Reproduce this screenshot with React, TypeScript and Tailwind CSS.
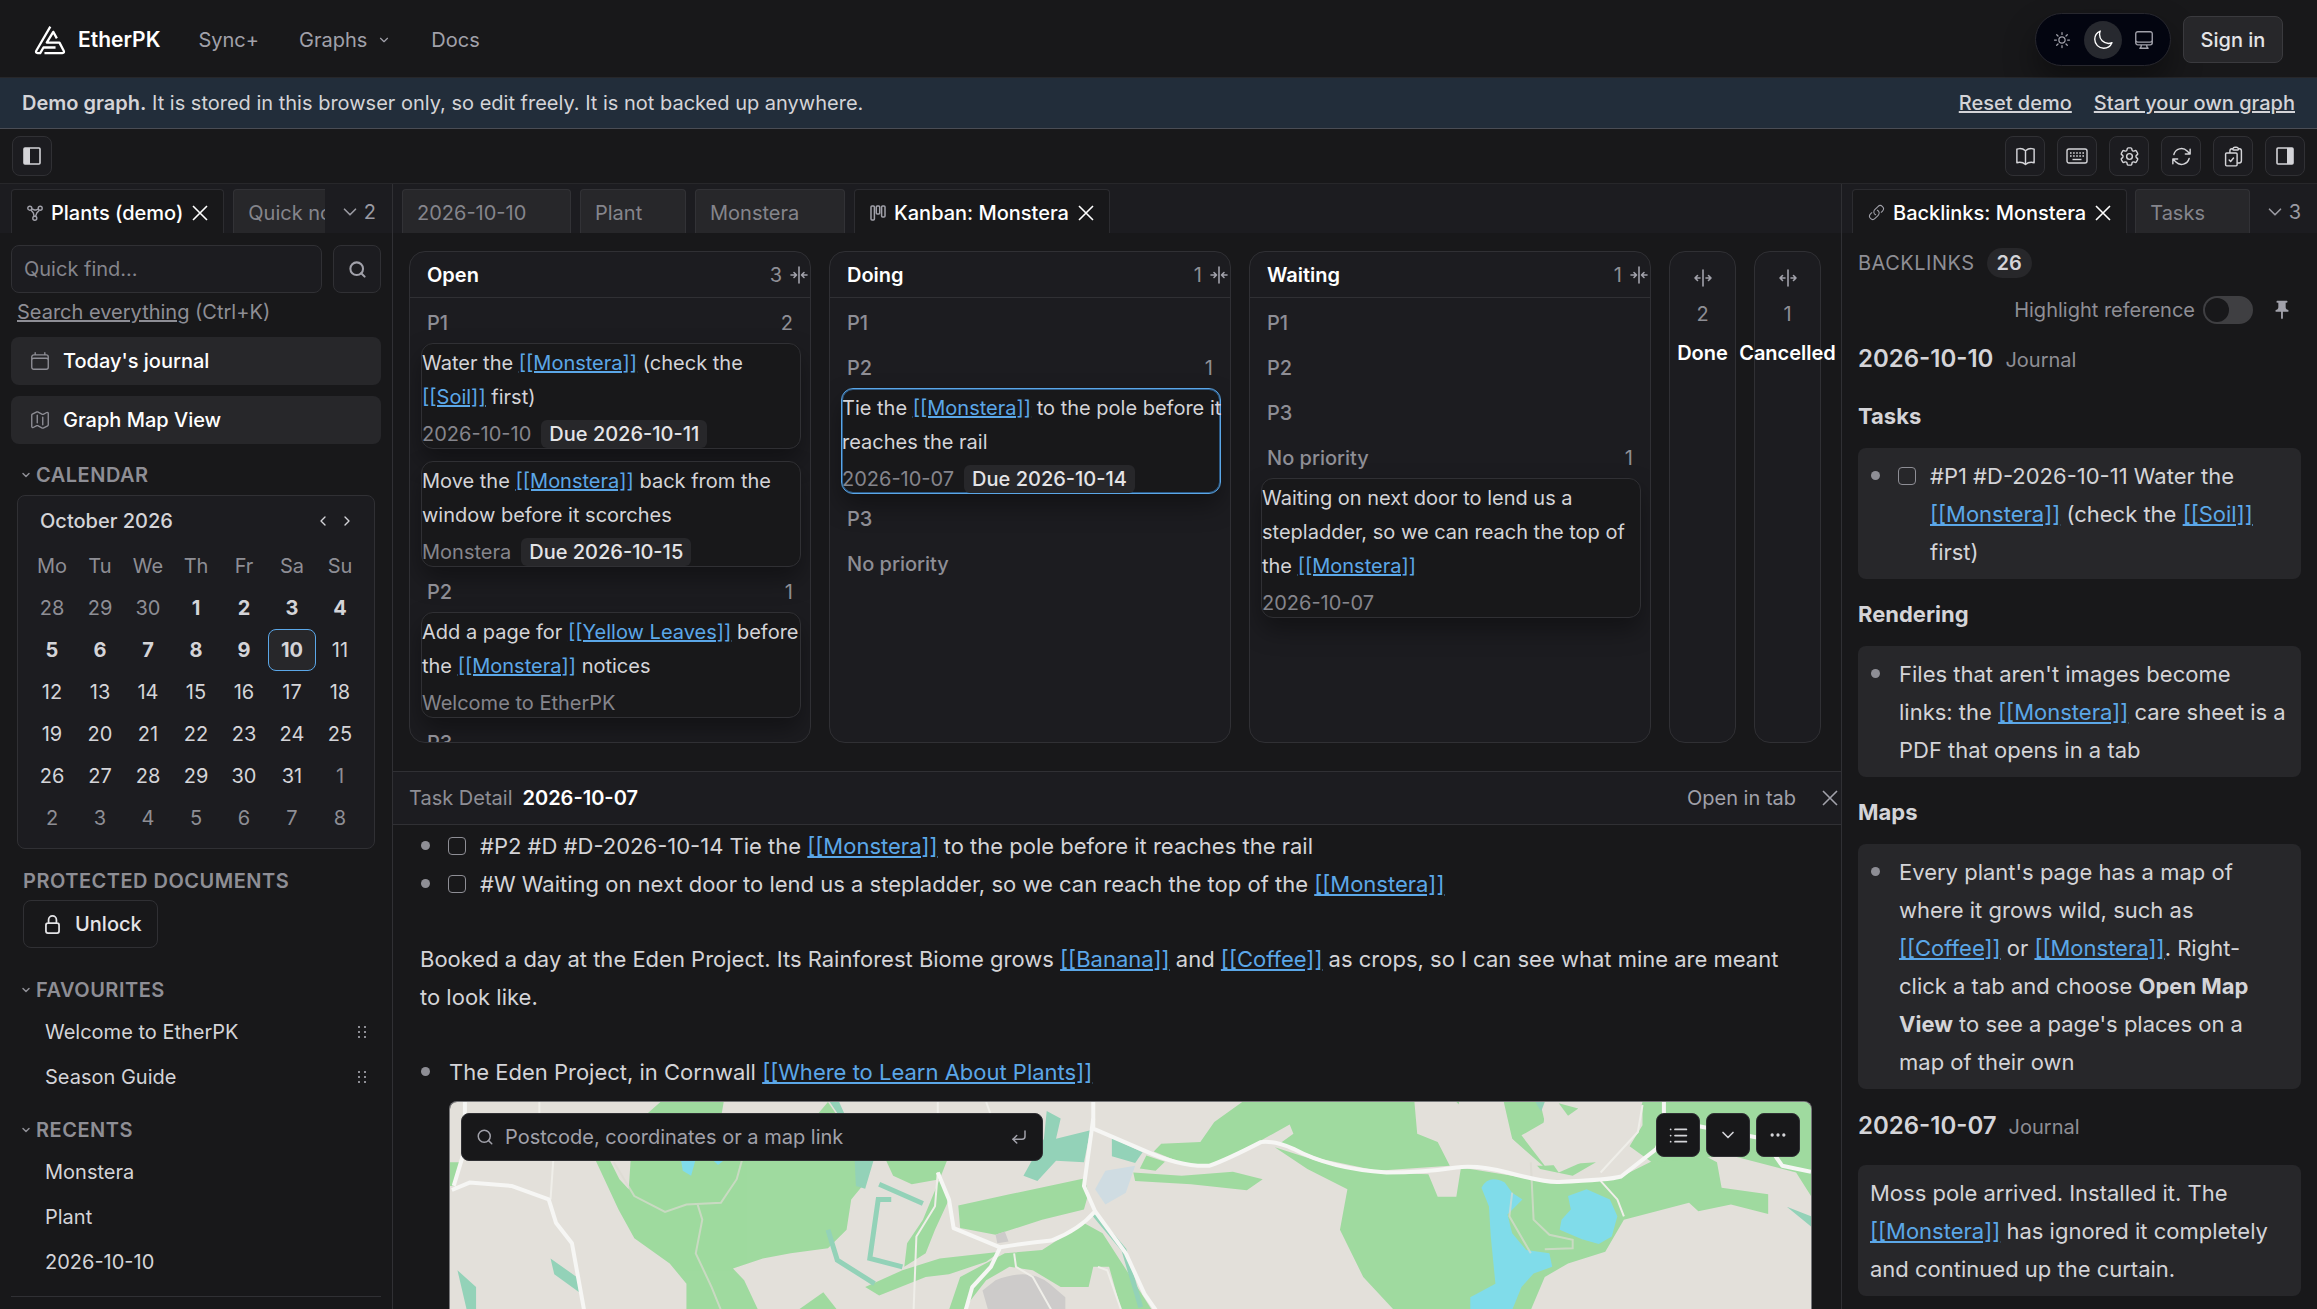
import type { ReactNode } from "react";
import {
  HiOutlineArrowPath,
  HiOutlineBookOpen,
  HiOutlineCalendar,
  HiOutlineClipboardDocumentCheck,
  HiOutlineCog6Tooth,
  HiOutlineComputerDesktop,
  HiOutlineLink,
  HiOutlineLockClosed,
  HiOutlineMap,
  HiOutlineMoon,
  HiOutlineSun,
} from "react-icons/hi2";
import { ChevronDown, ChevronLeft, ChevronRight, CornerDownLeft, Ellipsis, List, Search } from "lucide-react";
import { MdPushPin } from "react-icons/md";

const Logo = () => (
  <svg viewBox="70 42 98 90" className="w-8 h-[30px]" fill="none" stroke="#fff" strokeWidth="7" strokeLinejoin="round" aria-hidden="true">
    <path d="M120 46 L77 120 Q74 127 81 127 H89 L99 110 H136" />
    <path d="M102 127 H157 Q164 127 161 120 L148 95 H109 L129 62 L140 82" />
  </svg>
);

const CloseIcon = () => (
  <svg viewBox="0 0 16 16" className="w-4 h-4" stroke="currentColor" strokeWidth="1.6" aria-hidden="true">
    <path d="M1 1 L15 15 M15 1 L1 15" />
  </svg>
);

const GraphIcon = () => (
  <svg viewBox="0 0 16 16" className="w-4 h-4" fill="none" stroke="currentColor" strokeWidth="1.4" aria-hidden="true">
    <circle cx="2.8" cy="3.2" r="2" />
    <circle cx="13.2" cy="3.2" r="2" />
    <circle cx="7.8" cy="13.2" r="2" />
    <path d="M4.8 3.8 L7.5 5 H9 L11.4 4.2 M4 5 L6.4 8 L7 11.2 M12.4 5.2 L9.8 8 L8.6 11.2" />
  </svg>
);

const BoardIcon = () => (
  <svg viewBox="0 0 16 16" className="w-4 h-4" fill="none" stroke="currentColor" strokeWidth="1.5" aria-hidden="true">
    <rect x="1" y="1" width="3.4" height="14" rx="1" />
    <rect x="6.3" y="1" width="3.4" height="8" rx="1" />
    <rect x="11.6" y="1" width="3.4" height="11" rx="1" />
  </svg>
);

const CollapseIcon = () => (
  <svg viewBox="0 0 18 18" className="w-[18px] h-[18px]" fill="none" stroke="currentColor" strokeWidth="1.6" strokeLinecap="round" strokeLinejoin="round" aria-hidden="true">
    <path d="M9 1 V17 M1 9 H6 M4 6.5 L6.5 9 L4 11.5 M17 9 H12 M14 6.5 L11.5 9 L14 11.5" />
  </svg>
);

const ExpandIcon = () => (
  <svg viewBox="0 0 18 18" className="w-[18px] h-[18px]" fill="none" stroke="currentColor" strokeWidth="1.6" strokeLinecap="round" strokeLinejoin="round" aria-hidden="true">
    <path d="M9 1 V17 M6 9 H1 M3.5 6.5 L1 9 L3.5 11.5 M12 9 H17 M14.5 6.5 L17 9 L14.5 11.5" />
  </svg>
);

const KeyboardIcon = () => (
  <svg viewBox="0 0 22 18" className="w-[22px] h-[18px]" fill="none" stroke="currentColor" strokeWidth="1.4" aria-hidden="true">
    <rect x="1" y="2" width="20" height="14" rx="2" />
    <path d="M4 6 H18 M4 9 H18" strokeDasharray="1.6 1.5" />
    <path d="M6.5 12.5 H15.5" />
  </svg>
);

const PanelLeftIcon = () => (
  <svg viewBox="0 0 18 18" className="w-[18px] h-[18px]" aria-hidden="true">
    <rect x="1" y="1" width="16" height="16" rx="1" fill="none" stroke="currentColor" strokeWidth="1.6" />
    <rect x="1" y="1" width="6" height="16" fill="currentColor" />
  </svg>
);

const PanelRightIcon = () => (
  <svg viewBox="0 0 18 18" className="w-[18px] h-[18px]" aria-hidden="true">
    <rect x="1" y="1" width="16" height="16" rx="1" fill="none" stroke="currentColor" strokeWidth="1.6" />
    <rect x="11" y="1" width="6" height="16" fill="currentColor" />
  </svg>
);

const GripIcon = () => (
  <svg viewBox="0 0 8 12" className="w-2 h-3" fill="currentColor" aria-hidden="true">
    <path d="M0 0h2v2h-2z M6 0h2v2h-2z M0 5h2v2h-2z M6 5h2v2h-2z M0 10h2v2h-2z M6 10h2v2h-2z" />
  </svg>
);

function WikiLink({ children }: { children: string }) {
  return (
    <a href="#" className="text-[#5ba7e8] underline">
      {`[[${children}]]`}
    </a>
  );
}

function ToolButton({ label, children }: { label: string; children: ReactNode }) {
  return (
    <button aria-label={label} className="flex items-center justify-center w-10 h-10 rounded-lg border border-[#303034] bg-[#1c1c20] text-[#d4d4d8]">
      {children}
    </button>
  );
}

/* ---------- Tabs ---------- */

function ActiveTab({ icon, children }: { icon: ReactNode; children: ReactNode }) {
  return (
    <div className="flex items-center shrink-0 h-11 pt-[2px] px-[15px] border border-b-0 border-[#2c2c30] rounded-t-sm bg-[#18181a] text-white font-medium">
      <span className="text-[#a1a1aa] mr-2">{icon}</span>
      <span className="whitespace-nowrap">{children}</span>
      <button aria-label="Close tab" className="ml-[9px]">
        <CloseIcon />
      </button>
    </div>
  );
}

function Tab({ className, children }: { className: string; children: ReactNode }) {
  return (
    <button className={`h-11 pt-[2px] pl-[14px] text-left whitespace-nowrap overflow-hidden border border-b-0 border-[#323236] rounded-t-sm bg-[#27272a] text-[#85858c] ${className}`}>
      {children}
    </button>
  );
}

function MoreTabs({ count }: { count: number }) {
  return (
    <button aria-label={`${count} more tabs`} className="flex items-center gap-[3px] h-11 pt-[2px] ml-auto text-[#9a9aa2]">
      <ChevronDown size={22} strokeWidth={1.8} />
      {count}
    </button>
  );
}

/* ---------- Sidebar ---------- */

const weekdays = ["Mo", "Tu", "We", "Th", "Fr", "Sa", "Su"];
const weeks = [
  [28, 29, 30, 1, 2, 3, 4],
  [5, 6, 7, 8, 9, 10, 11],
  [12, 13, 14, 15, 16, 17, 18],
  [19, 20, 21, 22, 23, 24, 25],
  [26, 27, 28, 29, 30, 31, 1],
  [2, 3, 4, 5, 6, 7, 8],
];

function dayClass(week: number, day: number) {
  const outside = (week === 0 && day > 20) || (week > 3 && day < 10);
  if (outside) return "text-[#8e8e95]";
  if (day === 10) return "font-bold rounded-lg border border-[#5ba7e8] bg-[#27272a]";
  return day < 10 ? "font-bold" : "";
}

function Calendar() {
  return (
    <div className="mx-[6px] px-[10px] pb-[9px] border border-[#303034] rounded-lg bg-[#1c1c20]">
      <div className="flex items-center h-[49px] pl-3 pr-[9px] text-[#d4d4d8]">
        <span className="font-medium">October 2026</span>
        <button aria-label="Previous month" className="ml-auto">
          <ChevronLeft size={16} />
        </button>
        <button aria-label="Next month" className="ml-2">
          <ChevronRight size={16} />
        </button>
      </div>
      <table className="w-full table-fixed text-center text-[#d4d4d8]">
        <thead>
          <tr>
            {weekdays.map((name) => (
              <th key={name} className="h-[42px] p-0 font-normal text-[#8e8e95]">{name}</th>
            ))}
          </tr>
        </thead>
        <tbody>
          {weeks.map((days, week) => (
            <tr key={week}>
              {days.map((day) => (
                <td key={day} className="p-0">
                  <button className={`w-full h-[42px] ${dayClass(week, day)}`}>{day}</button>
                </td>
              ))}
            </tr>
          ))}
        </tbody>
      </table>
    </div>
  );
}

function SectionToggle({ children }: { children: string }) {
  return (
    <button className="flex items-center gap-1 pl-[9px] h-[30px] font-semibold tracking-wide text-[#8e8e95]">
      <ChevronDown size={12} strokeWidth={3} />
      {children}
    </button>
  );
}

function Sidebar() {
  return (
    <aside className="flex flex-col shrink-0 w-[393px] border-r border-[#303034]">
      <div className="flex items-end h-[49px] pl-[11px] pr-4 bg-[#1c1c20]">
        <ActiveTab icon={<GraphIcon />}>Plants (demo)</ActiveTab>
        <div className="w-[92px] ml-[9px] overflow-hidden">
          <Tab className="w-[130px]">Quick notes</Tab>
        </div>
        <MoreTabs count={2} />
      </div>

      <div className="flex flex-col flex-1 min-h-0 px-[11px] pt-3">
        <div className="flex gap-[11px]">
          <input aria-label="Quick find" placeholder="Quick find..." className="flex-1 min-w-0 h-12 px-3 rounded-lg border border-[#303034] bg-[#1c1c20] placeholder:text-[#85858c]" />
          <button aria-label="Search" className="flex items-center justify-center w-12 h-12 rounded-lg border border-[#303034] bg-[#1c1c20] text-[#a1a1aa]">
            <Search size={19} strokeWidth={2.6} />
          </button>
        </div>
        <p className="h-11 pt-1 pl-[6px] text-[#8e8e95]">
          <a href="#" className="underline">Search everything</a> (Ctrl+K)
        </p>
        <button className="flex items-center gap-3 h-12 pl-[18px] mb-[11px] rounded-lg bg-[#27272a] font-medium text-white">
          <HiOutlineCalendar className="text-[#8e8e95]" size={22} />
          Today's journal
        </button>
        <button className="flex items-center gap-3 h-12 pl-[18px] rounded-lg bg-[#27272a] font-medium text-white">
          <HiOutlineMap className="text-[#8e8e95]" size={22} />
          Graph Map View
        </button>

        <div className="mt-4 mb-[5px]">
          <SectionToggle>CALENDAR</SectionToggle>
        </div>
        <Calendar />

        <h2 className="mt-[17px] pl-3 h-[30px] font-semibold tracking-wide text-[#8e8e95]">PROTECTED DOCUMENTS</h2>
        <button className="flex items-center gap-3 w-[135px] h-12 mt-1 ml-3 pl-[18px] rounded-lg border border-[#303034] font-medium text-[#e4e4e7]">
          <HiOutlineLockClosed size={21} strokeWidth={2} />
          Unlock
        </button>

        <div className="mt-[27px] mb-1">
          <SectionToggle>FAVOURITES</SectionToggle>
        </div>
        {["Welcome to EtherPK", "Season Guide"].map((page) => (
          <div key={page} className="flex items-center justify-between h-[45px] pl-[34px] pr-[15px] text-[#d4d4d8]">
            <a href="#">{page}</a>
            <span className="text-[#8e8e95]">
              <GripIcon />
            </span>
          </div>
        ))}

        <div className="mt-4 mb-1">
          <SectionToggle>RECENTS</SectionToggle>
        </div>
        {["Monstera", "Plant", "2026-10-10"].map((page) => (
          <div key={page} className="flex items-center h-[45px] shrink-0 pl-[34px] text-[#d4d4d8]">
            <a href="#">{page}</a>
          </div>
        ))}
        <hr className="mt-3 border-[#303034]" />
      </div>
    </aside>
  );
}

/* ---------- Kanban ---------- */

interface Card {
  text: ReactNode;
  source: string;
  due?: string;
  selected?: boolean;
}

interface Group {
  name: string;
  cards: Card[];
}

const openGroups: Group[] = [
  {
    name: "P1",
    cards: [
      { text: <>Water the <WikiLink>Monstera</WikiLink> (check the <WikiLink>Soil</WikiLink> first)</>, source: "2026-10-10", due: "2026-10-11" },
      { text: <>Move the <WikiLink>Monstera</WikiLink> back from the window before it scorches</>, source: "Monstera", due: "2026-10-15" },
    ],
  },
  {
    name: "P2",
    cards: [{ text: <>Add a page for <WikiLink>Yellow Leaves</WikiLink> before the <WikiLink>Monstera</WikiLink> notices</>, source: "Welcome to EtherPK" }],
  },
  { name: "P3", cards: [] },
];

const doingGroups: Group[] = [
  { name: "P1", cards: [] },
  {
    name: "P2",
    cards: [{ text: <>Tie the <WikiLink>Monstera</WikiLink> to the pole before it reaches the rail</>, source: "2026-10-07", due: "2026-10-14", selected: true }],
  },
  { name: "P3", cards: [] },
  { name: "No priority", cards: [] },
];

const waitingGroups: Group[] = [
  { name: "P1", cards: [] },
  { name: "P2", cards: [] },
  { name: "P3", cards: [] },
  {
    name: "No priority",
    cards: [{ text: <>Waiting on next door to lend us a stepladder, so we can reach the top of the <WikiLink>Monstera</WikiLink></>, source: "2026-10-07" }],
  },
];

function KanbanCard({ card }: { card: Card }) {
  return (
    <article
      className={`mb-3 pt-[2px] rounded-xl border bg-[#18181a] shadow-[0_12px_24px_rgba(0,0,0,0.35)] ${
        card.selected ? "border-[#5ba7e8] inset-ring inset-ring-[#2d5a86]" : "border-[#303034]"
      }`}
    >
      <p className="-mr-1 leading-[34px] text-[#d4d4d8]">{card.text}</p>
      <div className="flex items-center gap-[10px] h-7 mt-[6px]">
        <span className="text-[#85858c]">{card.source}</span>
        {card.due && <span className="flex items-center h-7 px-2 rounded-md bg-[#27272a] font-medium text-[#e4e4e7]">Due {card.due}</span>}
      </div>
    </article>
  );
}

function KanbanColumn({ name, count, groups }: { name: string; count: number; groups: Group[] }) {
  return (
    <section className="flex flex-col flex-1 min-w-0 border border-[#303034] rounded-2xl bg-[#1c1c20] overflow-hidden">
      <header className="flex items-center shrink-0 h-[46px] pl-[17px] pr-[2px] border-b border-[#303034]">
        <h3 className="font-semibold text-white">{name}</h3>
        <span className="ml-auto mr-2 text-[#8e8e95]">{count}</span>
        <button aria-label={`Collapse ${name}`} className="text-[#a1a1aa]">
          <CollapseIcon />
        </button>
      </header>
      <div className="flex-1 min-h-0 pt-[5px] pl-[11px] pr-[9px] overflow-hidden">
        {groups.map((group) => (
          <div key={group.name} className="pb-[5px]">
            <div className="flex items-center justify-between h-10 pl-[6px] pr-2 text-[#8e8e95]">
              <h4 className="font-medium">{group.name}</h4>
              {group.cards.length > 0 && <span>{group.cards.length}</span>}
            </div>
            <div className="-mb-3 empty:mb-0">
              {group.cards.map((card) => (
                <KanbanCard key={card.source} card={card} />
              ))}
            </div>
          </div>
        ))}
      </div>
    </section>
  );
}

function CollapsedColumn({ name, count }: { name: string; count: number }) {
  return (
    <section className="flex flex-col items-center shrink-0 w-[67px] pt-[17px] border border-[#303034] rounded-2xl bg-[#1c1c20]">
      <button aria-label={`Expand ${name}`} className="text-[#a1a1aa]">
        <ExpandIcon />
      </button>
      <span className="mt-3 leading-[30px] text-[#8e8e95]">{count}</span>
      <h3 className="mt-[9px] leading-[30px] font-semibold text-white">{name}</h3>
    </section>
  );
}

/* ---------- Map ---------- */

function MapDrawing() {
  return (
    <svg viewBox="64 951 1462 617" preserveAspectRatio="none" className="block w-full h-full" aria-label="Map of the Eden Project">
      <rect x="64" y="951" width="1462" height="617" fill="#e3e0da" />
      <g fill="#9fda9f">
        <path d="M290 951 H358 L355 1000 H270Z M470 951 L482 1000 H455Z M64 1130 H75 L70 1200 H64Z" />
        <path d="M218 1110 H505 L510 1190 L495 1240 L490 1330 L470 1385 L430 1400 L400 1415 L368 1445 L380 1480 L395 1568 H318 L318 1490 L300 1430 L262 1355 L245 1270Z" />
        <path d="M530 1110 H600 L590 1180 L560 1195 L540 1170Z" />
        <path d="M610 1258 L665 1225 L745 1178 L750 1220 L745 1270 L700 1300 L650 1345 L612 1325Z" />
        <path d="M915 951 H1100 L1103 1045 L1125 1070 L1138 1140 L1060 1155 L1000 1120 L955 1075 L970 1045 L966 1018 L935 1065 L880 1140 L858 1140 L820 1098 L828 1075 L870 1070 L885 1010Z" />
        <path d="M798 1160 L850 1170 L905 1158 L937 1180 L920 1213 L860 1195 L800 1185Z M812 1110 L832 1128 L822 1155 L805 1148Z" />
        <path d="M950 1085 L985 1150 L1028 1210 L1020 1330 L1045 1470 L1078 1568 H1225 L1240 1470 L1265 1430 L1305 1395 L1325 1300 L1395 1250 L1405 1275 L1440 1255 L1480 1283 V1225 L1430 1205 L1425 1130 L1370 1050 L1360 1120 L1320 1175 L1250 1190 L1150 1145 L1145 1232 L1125 1232 L1115 1165 L1060 1160 L1000 1130Z" />
        <path d="M1345 951 H1526 V1230 L1510 1160 L1440 1110 L1355 1130 L1330 1080Z" />
        <path d="M1145 951 H1235 L1240 1010 L1215 1050 L1240 1140 L1295 1130 L1270 1170 L1235 1150 L1205 1060 L1193 990 H1160Z M1255 955 L1276 970 L1265 992Z" />
        <path d="M590 1180 L600 1240 L585 1330 L575 1400 L552 1440 L555 1370 L572 1300Z" />
        <path d="M510 1500 L550 1450 L590 1415 L655 1395 L640 1425 L600 1462 L575 1470 L525 1525Z" />
        <path d="M700 1390 L745 1310 L765 1340 L800 1490 L818 1568 H785 L772 1440 L755 1440 L750 1500 L720 1500 L690 1450 L665 1440 L640 1480 L615 1568 H600 L612 1470 L660 1400Z" />
        <path d="M438 1568 L465 1515 L480 1568Z" />
      </g>
      {/* clearings */}
      <path fill="#e3e0da" d="M1148 951 H1196 L1205 1060 L1238 1140 L1210 1140 L1150 1135 L1128 1060 L1142 1040Z M1240 990 L1300 1010 L1345 960 L1345 1020 L1325 1110 L1280 1130 L1255 1160 L1235 1080Z M236 1125 H258 L256 1210 L246 1180Z" />
      <g fill="#93d2b8">
        <path d="M705 978 L720 1000 L715 1060 L752 1035 L745 1130 L715 1125 L695 1185 L680 1170 L690 1120 L702 1060Z" />
        <path d="M775 1058 L808 1100 L800 1132 L775 1112Z M498 1080 L520 1115 L510 1208 L500 1200Z M472 951 H482 L490 1000 H484Z" />
        <path d="M72 1450 L92 1500 V1568 H82Z M172 1415 L200 1470 L205 1520 L176 1462Z M1500 1262 L1526 1290 V1320Z M1230 951 H1240 L1236 980Z" />
      </g>
      <g fill="none" stroke="#93d2b8" strokeWidth="5">
        <path vectorEffect="non-scaling-stroke" d="M525 1195 L572 1252 M538 1240 L524 1240 L515 1415 L550 1440 M470 1330 L480 1420 L520 1490 M755 1280 L788 1390 L806 1560" />
      </g>
      <path fill="#cfdce2" d="M768 1155 L800 1140 L790 1220 L768 1255 L757 1210Z" />
      <path fill="#cdcbca" d="M650 1480 Q685 1440 708 1490 L725 1530 V1568 H642 L636 1510Z M650 1345 L660 1335 L664 1365 L652 1370Z" />
      <g fill="#80dcea">
        <path d="M1172 1205 Q1180 1165 1197 1190 L1205 1220 L1216 1240 L1200 1285 L1205 1340 L1220 1390 L1245 1400 L1248 1440 L1228 1460 L1215 1500 L1205 1568 H1160 V1530 L1187 1490 L1182 1350 L1180 1260Z" />
        <path d="M1285 1210 L1310 1240 L1318 1290 L1312 1350 L1298 1372 L1280 1358 L1256 1330 L1258 1300 L1268 1270 L1265 1230Z" />
        <path d="M312 1120 H328 L323 1170 L314 1155Z M345 1120 H360 L352 1138Z" />
      </g>
      <g fill="none" stroke="#dcdad2" strokeWidth="2">
        <path vectorEffect="non-scaling-stroke" d="M240 1130 L262 1230 L295 1277 L318 1255 L355 1250 L372 1180 L378 1120 M330 1255 L335 1300 L328 1400 L345 1500 L355 1568" opacity="0.7" />
        <path vectorEffect="non-scaling-stroke" d="M1225 1130 L1228 1300 L1245 1345 L1270 1360 L1270 1385 L1240 1388 M1205 1220 L1202 1290 L1225 1400" opacity="0.7" />
      </g>
      <g fill="none" stroke="#efeee9" strokeWidth="2">
        <path vectorEffect="non-scaling-stroke" d="M175 1120 L172 1240 M160 951 V990 M588 951 V990 M640 951 L645 990 M1300 1185 L1318 1240 L1325 1290 M1345 960 L1340 1040 L1300 1160" />
        <path vectorEffect="non-scaling-stroke" d="M588 1160 L585 1260 L565 1350 L562 1568 M760 1440 L770 1450 L785 1568 M670 1400 L672 1440 L690 1470 L710 1568" />
      </g>
      <g fill="none" stroke="#f6f6f4" strokeWidth="4" strokeLinejoin="round">
        <path vectorEffect="non-scaling-stroke" d="M755 951 V1030 L810 1095 Q850 1145 880 1140 Q900 1120 935 1070 Q950 1065 970 1090 Q1010 1150 1070 1160 Q1110 1160 1145 1145 Q1170 1138 1200 1160 Q1240 1190 1255 1188 Q1310 1182 1322 1172 L1360 1090 L1368 1040 V951" />
        <path vectorEffect="non-scaling-stroke" d="M755 1000 L745 1200 L757 1275 L790 1400 L810 1520 L822 1568 M757 1275 Q740 1330 710 1362 Q680 1370 655 1382 L645 1440 L625 1500 L618 1568 M655 1382 L605 1325 L600 1240 L588 1160" />
        <path vectorEffect="non-scaling-stroke" d="M80 951 V1090 L68 1200 M66 1212 L85 1190 L130 1200 L170 1240 L178 1310 L195 1370 L208 1568 M1400 1020 L1475 1060 L1495 1140 L1526 1158" />
      </g>
    </svg>
  );
}

function MapButton({ label, children }: { label: string; children: ReactNode }) {
  return (
    <button aria-label={label} className="flex items-center justify-center w-11 h-11 rounded-lg border border-[#303034] bg-[#18181a] text-[#d4d4d8]">
      {children}
    </button>
  );
}

function MapEmbed() {
  return (
    <div className="relative h-[340px] ml-[29px] mr-[9px] shrink-0 rounded-t-lg border border-b-0 border-[#77777a] overflow-hidden">
      <div className="h-[208px]">
        <MapDrawing />
      </div>
      <div className="absolute top-[11px] inset-x-[11px] flex items-start gap-[6px]">
        <div className="flex items-center w-[582px] h-12 px-[14px] mr-auto rounded-lg border border-[#303034] bg-[#18181a] text-[#a1a1aa]">
          <Search size={18} strokeWidth={2} />
          <input aria-label="Find a place" placeholder="Postcode, coordinates or a map link" className="flex-1 ml-[11px] placeholder:text-[#a1a1aa]" />
          <CornerDownLeft size={18} strokeWidth={2} />
        </div>
        <MapButton label="Places"><List size={21} /></MapButton>
        <MapButton label="More"><ChevronDown size={20} /></MapButton>
        <MapButton label="Options"><Ellipsis size={20} /></MapButton>
      </div>
    </div>
  );
}

/* ---------- Editor ---------- */

const Bullet = () => <span className="shrink-0 w-[9px] h-[9px] mt-[14px] ml-px rounded-full bg-[#8e8e95]" />;

function TaskItem({ id, children }: { id: string; children: ReactNode }) {
  return (
    <div className="flex">
      <Bullet />
      <input id={id} type="checkbox" className="appearance-none shrink-0 w-[18px] h-[18px] mt-[10px] ml-[18px] mr-[14px] rounded border border-[#8e8e95]" />
      <label htmlFor={id}>{children}</label>
    </div>
  );
}

function Editor() {
  return (
    <div className="flex flex-col flex-1 min-h-0 pl-[27px] pr-5 pt-[2px] overflow-hidden text-[22px] leading-[38px] text-[#d4d4d8]">
      <TaskItem id="task-tie">
        #P2 #D #D-2026-10-14 Tie the <WikiLink>Monstera</WikiLink> to the pole before it reaches the rail
      </TaskItem>
      <TaskItem id="task-wait">
        #W Waiting on next door to lend us a stepladder, so we can reach the top of the <WikiLink>Monstera</WikiLink>
      </TaskItem>
      <p className="mt-[37px] pr-6">
        Booked a day at the Eden Project. Its Rainforest Biome grows <WikiLink>Banana</WikiLink> and <WikiLink>Coffee</WikiLink> as crops, so I can see what mine are meant to look like.
      </p>
      <div className="flex mt-[37px] mb-[10px]">
        <Bullet />
        <p className="ml-[19px]">
          The Eden Project, in Cornwall <WikiLink>Where to Learn About Plants</WikiLink>
        </p>
      </div>
      <div className="text-xl">
        <MapEmbed />
      </div>
    </div>
  );
}

function Main() {
  return (
    <main className="flex flex-col flex-1 min-w-0">
      <div className="flex items-end h-[49px] shrink-0 pl-[9px] gap-[9px] bg-[#1c1c20]">
        <Tab className="w-[169px]">2026-10-10</Tab>
        <Tab className="w-[106px]">Plant</Tab>
        <Tab className="w-[150px]">Monstera</Tab>
        <ActiveTab icon={<BoardIcon />}>Kanban: Monstera</ActiveTab>
      </div>

      <div className="flex gap-[18px] h-[538px] shrink-0 pt-[18px] pb-7 pl-4 pr-5">
        <KanbanColumn name="Open" count={3} groups={openGroups} />
        <KanbanColumn name="Doing" count={1} groups={doingGroups} />
        <KanbanColumn name="Waiting" count={1} groups={waitingGroups} />
        <CollapsedColumn name="Done" count={2} />
        <CollapsedColumn name="Cancelled" count={1} />
      </div>

      <div className="flex items-center shrink-0 h-[54px] pl-4 pr-[3px] border-y border-[#303034] bg-[#1c1c20] text-[#8e8e95]">
        <span>Task Detail</span>
        <h2 className="ml-[10px] font-semibold text-white">2026-10-07</h2>
        <button className="ml-auto mr-[26px] text-[#a1a1aa]">Open in tab</button>
        <button aria-label="Close task detail" className="text-[#a1a1aa]">
          <CloseIcon />
        </button>
      </div>

      <Editor />
    </main>
  );
}

/* ---------- Backlinks ---------- */

function DayHeading({ children }: { children: string }) {
  return (
    <h2 className="flex items-baseline gap-3 text-2xl/[38px] font-semibold text-[#d4d4d8]">
      {children}
      <span className="text-xl font-normal text-[#8e8e95]">Journal</span>
    </h2>
  );
}

function Excerpt({ children }: { children: ReactNode }) {
  return <div className="px-3 pt-[9px] pb-2 rounded-lg bg-[#27272a]">{children}</div>;
}

function Backlinks() {
  return (
    <aside className="flex flex-col shrink-0 w-[476px] border-l border-[#303034]">
      <div className="flex items-end shrink-0 h-[49px] pl-[10px] pr-4 bg-[#1c1c20]">
        <ActiveTab icon={<HiOutlineLink size={17} />}>Backlinks: Monstera</ActiveTab>
        <Tab className="w-[115px] ml-2">Tasks</Tab>
        <MoreTabs count={3} />
      </div>

      <div className="flex-1 min-h-0 px-4 pt-[15px] overflow-hidden text-[22px] leading-[38px] text-[#d4d4d8]">
        <div className="flex items-center gap-3 h-[30px] text-xl">
          <h2 className="tracking-wide text-[#8e8e95]">BACKLINKS</h2>
          <span className="flex items-center h-[30px] px-[10px] rounded-full bg-[#27272a] font-semibold">26</span>
        </div>
        <div className="flex items-center justify-end h-[30px] mt-[17px] pr-2 text-xl text-[#8e8e95]">
          <label htmlFor="highlight">Highlight reference</label>
          <input
            id="highlight"
            type="checkbox"
            role="switch"
            className="appearance-none w-[50px] h-7 ml-2 rounded-full bg-[#3f3f42] border-2 border-[#3f3f42] before:block before:w-6 before:h-6 before:rounded-full before:bg-[#18181a]"
          />
          <button aria-label="Pin" className="ml-[18px] text-[#a1a1aa]">
            <MdPushPin size={22} />
          </button>
        </div>

        <div className="mt-[15px]">
          <DayHeading>2026-10-10</DayHeading>
        </div>
        <h3 className="mt-[19px] mb-[13px] font-bold">Tasks</h3>
        <Excerpt>
          <TaskItem id="task-water">
            #P1 #D-2026-10-11 Water the <WikiLink>Monstera</WikiLink> (check the <WikiLink>Soil</WikiLink> first)
          </TaskItem>
        </Excerpt>
        <h3 className="mt-4 mb-[13px] font-bold">Rendering</h3>
        <Excerpt>
          <div className="flex">
            <Bullet />
            <p className="ml-[19px]">
              Files that aren't images become links: the <WikiLink>Monstera</WikiLink> care sheet is a PDF that opens in a tab
            </p>
          </div>
        </Excerpt>
        <h3 className="mt-4 mb-[13px] font-bold">Maps</h3>
        <Excerpt>
          <div className="flex">
            <Bullet />
            <p className="ml-[19px] pr-2">
              Every plant's page has a map of where it grows wild, such as <WikiLink>Coffee</WikiLink> or <WikiLink>Monstera</WikiLink>. Right-click a tab and choose <b>Open Map View</b> to see a page's places on a map of their own
            </p>
          </div>
        </Excerpt>
        <div className="mt-[18px] mb-5">
          <DayHeading>2026-10-07</DayHeading>
        </div>
        <Excerpt>
          Moss pole arrived. Installed it. The <WikiLink>Monstera</WikiLink> has ignored it completely and continued up the curtain.
        </Excerpt>
      </div>
    </aside>
  );
}

/* ---------- Page ---------- */

function Header() {
  return (
    <header className="flex items-center shrink-0 h-[78px] pt-[2px] px-[34px] border-b border-[#27272a] text-[#a1a1aa]">
      <a href="#" className="flex items-center gap-3 text-[21px] font-semibold text-white">
        <Logo />
        EtherPK
      </a>
      <nav className="flex items-center gap-10 ml-[38px]">
        <a href="#">Sync+</a>
        <button className="flex items-center gap-[10px]">
          Graphs
          <ChevronDown size={14} />
        </button>
        <a href="#">Docs</a>
      </nav>
      <div className="flex items-center justify-between w-[136px] h-[53px] ml-auto mr-3 px-[14px] rounded-full border border-[#27272e] bg-[#030510] shadow-[0_16px_32px_rgba(0,0,0,0.4)]">
        <button aria-label="Light" className="w-6 flex justify-center">
          <HiOutlineSun size={20} />
        </button>
        <button aria-label="Dark" className="flex items-center justify-center w-[38px] h-[38px] rounded-full bg-[#27292f] text-white">
          <HiOutlineMoon size={22} />
        </button>
        <button aria-label="System" className="w-6 flex justify-center">
          <HiOutlineComputerDesktop size={22} />
        </button>
      </div>
      <button className="w-[100px] h-[47px] rounded-lg border border-[#3a3a3e] bg-[#27272a] font-medium text-[#e4e4e7]">Sign in</button>
    </header>
  );
}

export default function App() {
  return (
    <div className="flex flex-col h-screen overflow-hidden bg-[#18181a] font-['Inter',sans-serif] text-xl leading-[30px] text-[#d4d4d8]">
      <Header />
      <div className="flex items-center shrink-0 h-[51px] px-[22px] border-b border-[#4a4d55] bg-[#222d3a]">
        <p>
          <b className="font-semibold">Demo graph.</b> It is stored in this browser only, so edit freely. It is not backed up anywhere.
        </p>
        <button className="ml-auto font-medium underline">Reset demo</button>
        <a href="#" className="ml-[22px] font-medium underline">Start your own graph</a>
      </div>
      <div className="flex items-center shrink-0 gap-3 h-[55px] px-3 border-b border-[#27272a]">
        <div className="mr-auto">
          <ToolButton label="Toggle left panel"><PanelLeftIcon /></ToolButton>
        </div>
        <ToolButton label="Documentation"><HiOutlineBookOpen size={23} /></ToolButton>
        <ToolButton label="Shortcuts"><KeyboardIcon /></ToolButton>
        <ToolButton label="Settings"><HiOutlineCog6Tooth size={23} /></ToolButton>
        <ToolButton label="Sync"><HiOutlineArrowPath size={23} /></ToolButton>
        <ToolButton label="Tasks"><HiOutlineClipboardDocumentCheck size={23} /></ToolButton>
        <ToolButton label="Toggle right panel"><PanelRightIcon /></ToolButton>
      </div>
      <div className="flex flex-1 min-h-0">
        <Sidebar />
        <Main />
        <Backlinks />
      </div>
    </div>
  );
}
